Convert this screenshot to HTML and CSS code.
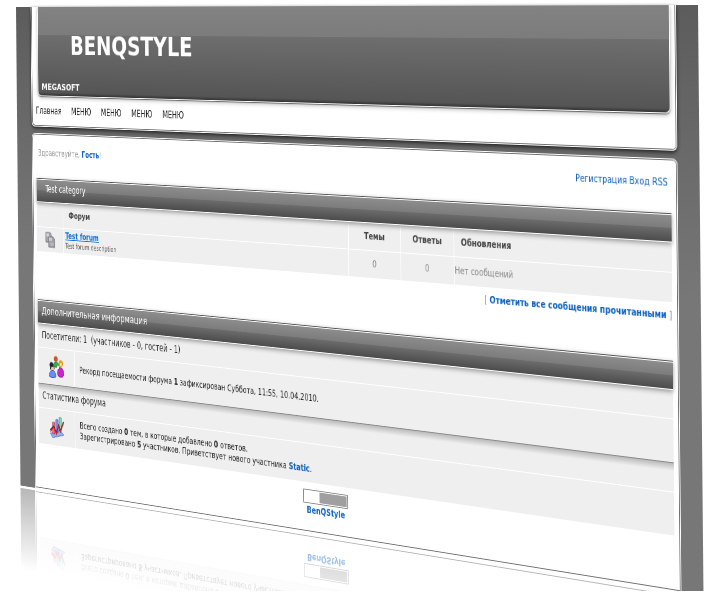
FILE: index.html
```html
<!DOCTYPE html>
<html lang="ru">
<head>
<meta charset="utf-8">
<title>BenQStyle</title>
<link rel="stylesheet" href="styles.css">
</head>
<body>
<div class="viewport">
  <div class="stage">
    <header class="panel masthead">
      <div class="hero">
        <h1 class="logo">BENQSTYLE</h1>
        <p class="tagline">MEGASOFT</p>
      </div>
      <nav class="menu">
        <a href="#">Главная</a>
        <a href="#">МЕНЮ</a>
        <a href="#">МЕНЮ</a>
        <a href="#">МЕНЮ</a>
        <a href="#">МЕНЮ</a>
      </nav>
    </header>

    <main class="panel board">
      <div class="userbar">
        <p class="hello">Здравствуйте, <a class="strong" href="#">Гость</a>!</p>
        <p class="account"><a href="#">Регистрация</a> <a href="#">Вход</a> <a href="#">RSS</a></p>
      </div>

      <section>
        <h2 class="bar category">Test category</h2>
        <table class="forums">
          <thead>
            <tr><th class="c-icon"></th><th class="c-name">Форум</th><th class="c-num">Темы</th><th class="c-num">Ответы</th><th class="c-last">Обновления</th></tr>
          </thead>
          <tbody>
            <tr>
              <td class="c-icon">
                <svg viewBox="0 0 18 20" width="18" height="20">
                  <path d="M1 1h8l2 2v10H1z" fill="#a9a5ac" stroke="#77737a"/>
                  <path d="M2 2h5v4H2z" fill="#d3d0d6"/>
                  <path d="M6 6h8l3 3v10H6z" fill="#a39fa7" stroke="#77737a"/>
                  <path d="M7 7h5v4H7z" fill="#cfccd2"/>
                  <path d="M9 13h6v4H9z" fill="#b9b5bd"/>
                </svg>
              </td>
              <td class="c-name"><a class="forum-link" href="#">Test forum</a><p class="desc">Test forum description</p></td>
              <td class="c-num">0</td>
              <td class="c-num">0</td>
              <td class="c-last">Нет сообщений</td>
            </tr>
          </tbody>
        </table>
        <p class="mark">[ <a class="strong" href="#">Отметить все сообщения прочитанными</a> ]</p>
      </section>

      <section>
        <h2 class="bar info">Дополнительная информация</h2>
        <div class="block">
          <h3 class="subhead">Посетители: 1 &nbsp;(участников - 0, гостей - 1)</h3>
          <div class="row">
            <div class="row-icon">
              <svg viewBox="0 0 28 28" width="28" height="28">
                <circle cx="13" cy="4" r="3.5" fill="#c9562c"/>
                <path d="M8 14c0-8 11-8 11 0z" fill="#2fb344" stroke="#1a6f2a"/>
                <circle cx="5" cy="12" r="3.5" fill="#22223c"/>
                <path d="M4 11l7 5-3 4-6-3z" fill="#20202c"/>
                <circle cx="22" cy="9" r="4" fill="#e0a018"/>
                <circle cx="22" cy="10" r="2" fill="#ffd9a0"/>
                <path d="M16 23c-1-12 12-12 11 0-2 4-9 4-11 0z" fill="#c626c8" stroke="#7d1585"/>
                <circle cx="17" cy="14" r="2" fill="#fff"/>
                <circle cx="7" cy="17" r="3" fill="#f4c3a3"/>
                <path d="M1 26c0-10 12-10 12 0-2 2-9 2-12 0z" fill="#6a8df0" stroke="#3656b8"/>
              </svg>
            </div>
            <p class="row-text">Рекорд посещаемости форума <b>1</b> зафиксирован Суббота, 11:55, 10.04.2010.</p>
          </div>
        </div>
        <div class="block shaded">
          <h3 class="subhead">Статистика форума</h3>
          <div class="row">
            <div class="row-icon">
              <svg viewBox="0 0 28 28" width="28" height="28">
                <path d="M2 22l18-5 6 5-20 5z" fill="#8fb2ef" stroke="#4d73c4"/>
                <path d="M6 8h4v14H6z" fill="#f0708c" stroke="#b83355"/>
                <path d="M12 4h4v16h-4z" fill="#7d96ee" stroke="#4c62be"/>
                <path d="M18 1h4v16h-4z" fill="#7fdcb4" stroke="#46a07f"/>
                <path d="M2 18l6-5 5 8 4-10 3 7 6-12" fill="none" stroke="#3b1722" stroke-width="2"/>
                <path d="M2 20l6-6 5 8 4-10 3 6 6-11" fill="none" stroke="#e0282e" stroke-width="1.5"/>
              </svg>
            </div>
            <p class="row-text">Всего создано <b>0</b> тем, в которые добавлено <b>0</b> ответов.<br>Зарегистрировано <b>5</b> участников. Приветствует нового участника <a class="strong" href="#">Static</a>.</p>
          </div>
        </div>
      </section>

      <footer class="footer">
        <svg viewBox="0 0 68 16" width="68" height="16">
          <path d="M.5.5h67v15H.5z" fill="#fff" stroke="#8a8a8a"/>
          <path d="M25 2h41v12H25z" fill="#a0a0a0"/>
        </svg>
        <a class="strong" href="#">BenQStyle</a>
      </footer>
    </main>
  </div>
</div>
</body>
</html>
```
FILE: styles.css
```css
* {
  box-sizing: border-box;
}

body {
  margin: 0;
  background: #fff;
  color: #222;
  font: 11px/13px "DejaVu Sans Condensed", "Noto Sans", sans-serif;
}

h1, h2, h3, p {
  margin: 0;
  font-weight: normal;
}

a {
  color: #0a5fbe;
  text-decoration: none;
}

.strong {
  font-weight: bold;
}

.viewport {
  height: calc(100vh - 2px);
  overflow: hidden;
}

/* The whole site is tilted in perspective and mirrored on the floor below. */
.stage {
  width: 143vw;
  padding: 0 27px;
  background: linear-gradient(#5c5c5c, #777 50%, #777);
  transform-origin: 0 0;
  transform: matrix3d(0.534687, -0.00287424, 0, -0.000185363, 0.0075023, 0.797555, 0, 0.0000001148, 0, 0, 1, 0, 16, 7, 0, 1);
  -webkit-box-reflect: below 3px linear-gradient(transparent 83%, rgba(0, 0, 0, 0.52));
}

.panel {
  border: 1px solid #fff;
  background: #fff;
  box-shadow: inset 0 0 0 1px #707070;
}

.masthead {
  border-top: 0;
  border-radius: 0 0 6px 6px;
  padding: 0 7px 0 11px;
  box-shadow: inset 1px -1px 0 #707070, inset -1px 0 0 #707070, 0 2px 4px #222;
}

.hero {
  display: flex;
  flex-direction: column;
  justify-content: space-between;
  height: 111px;
  padding: 30px 6px 3px;
  border: 1px solid #fff;
  border-top: 0;
  border-radius: 0 0 6px 6px;
  background: linear-gradient(#828282, #7c7c7c 35px, #6e6e6e 35px, #555 106px, #333);
  box-shadow: 0 1px 1px #666, 0 2px 5px #bbb;
  color: #fff;
}

.logo {
  padding-left: 52px;
  font: bold 32px/36px "DejaVu Sans", sans-serif;
}

.tagline {
  font: bold 11px/14px "DejaVu Sans", sans-serif;
}

.menu {
  display: flex;
  gap: 17px;
  height: 37px;
  align-items: center;
  margin-left: -4px;
  font-size: 12px;
}

.menu a {
  color: #111;
}

.board {
  margin-top: 8px;
  padding: 0 7px;
  border-radius: 6px 6px 0 0;
}

.userbar {
  display: flex;
  justify-content: space-between;
  align-items: center;
  height: 55px;
  padding: 0 4px 8px 3px;
  color: #999;
}

.bar {
  display: flex;
  align-items: center;
  height: 30px;
  padding-bottom: 4px;
  border-top: 1px solid #555;
  border-bottom: 1px solid #fff;
  background: linear-gradient(#8e8e8e, #7c7c7c 50%, #6c6c6c 50%, #4c4c4c);
  box-shadow: inset 0 1px 0 #fff, 0 2px 5px #999;
  position: relative;
  color: #fff;
}

.category {
  padding-left: 16px;
  font-size: 12px;
}

.info {
  padding-left: 7px;
  font-size: 13px;
}

.forums {
  width: 100%;
  table-layout: fixed;
  border-collapse: collapse;
  background: #efefef;
  color: #888;
}

.forums th,
.forums td {
  height: 31px;
  padding: 0;
  border-right: 1px solid #fff;
}

.forums th {
  height: 30px;
  border-bottom: 1px solid #fff;
  color: #444;
  font-weight: bold;
}

.forums .c-last {
  border-right: 0;
}

.c-icon {
  width: 5%;
  text-align: center;
}

.c-icon svg {
  display: block;
  margin: 0 auto;
}

.c-name {
  text-align: left;
}

.forums th.c-name,
.forums th.c-last {
  padding-left: 9px;
}

.forums td.c-name {
  padding-left: 3px;
}

.forum-link {
  color: #0a6fdc;
  font-weight: bold;
  text-decoration: underline;
}

.desc {
  color: #555;
  font-size: 9px;
  line-height: 12px;
}

.c-num {
  width: 8%;
  text-align: center;
}

.c-last {
  width: 30%;
  text-align: left;
}

.mark {
  padding: 7px 0 40px;
  color: #888;
  text-align: right;
}

.block {
  background: #efefef;
}

.shaded {
  border-top: 1px solid #888;
  background: linear-gradient(#bbb, #efefef 8px);
}

.subhead {
  height: 30px;
  padding: 8px 7px 0;
  border-bottom: 1px solid #fff;
  font-size: 12px;
  color: #333;
}

.row {
  display: flex;
  min-height: 44px;
}

.row-icon {
  display: grid;
  flex: 0 0 66px;
  place-items: center;
  border-right: 1px solid #fff;
}

.row-text {
  align-self: center;
  padding-left: 8px;
}

.footer {
  display: flex;
  flex-direction: column;
  align-items: center;
  gap: 1px;
  padding: 8px 0 18px;
}
```
